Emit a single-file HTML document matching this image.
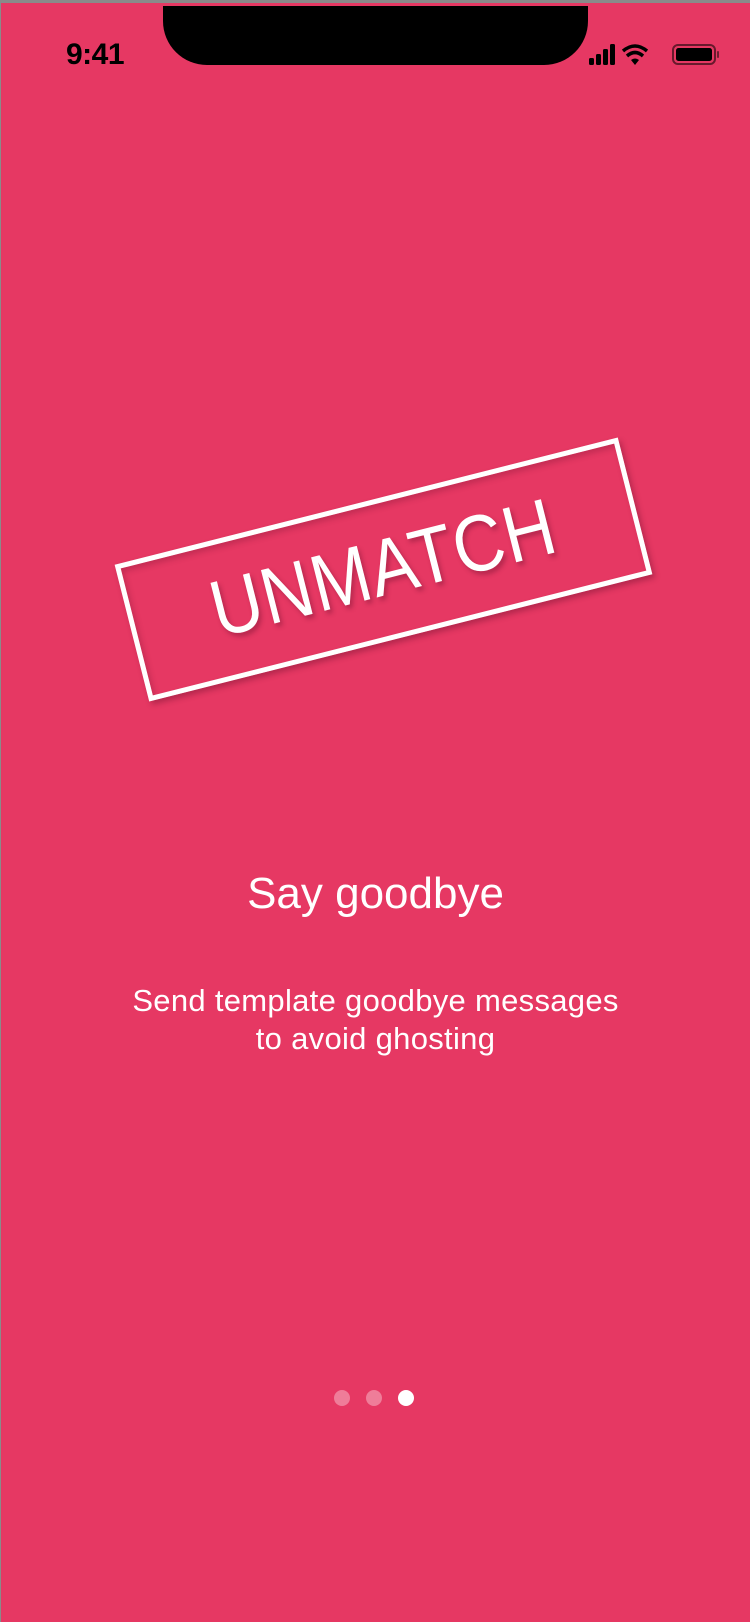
<!DOCTYPE html>
<html><head><meta charset="utf-8"><style>
html,body{margin:0;padding:0}
body{width:750px;height:1622px;background:#8a8a8a;position:relative;overflow:hidden;font-family:"Liberation Sans",sans-serif}
.screen{position:absolute;left:1px;top:3px;right:0;bottom:0;background:#E63863}
.notch{position:absolute;left:162px;top:3px;width:425px;height:59px;background:#000;border-radius:0 0 44px 44px}
.time{position:absolute;left:65px;top:35px;font-size:30px;color:#000;font-weight:bold;letter-spacing:-0.5px}
.stamp{position:absolute;left:123px;top:496px;width:509px;height:131px;border:5px solid #fff;transform:rotate(-14.2deg);box-shadow:2px 4px 6px rgba(120,20,50,.45),inset 2px 4px 6px rgba(120,20,50,.3)}
.stamp span{position:absolute;left:0;right:0;top:18px;text-align:center;color:#fff;font-size:80px;letter-spacing:1px;transform:scaleX(.88);text-shadow:2px 4px 5px rgba(120,20,50,.45)}
.t1{position:absolute;left:0;right:0;top:866px;text-align:center;color:#fff;font-size:44px}
.t2{position:absolute;left:0;right:0;top:979px;text-align:center;color:#fff;font-size:31px;line-height:38px;letter-spacing:0.3px}
.dot{position:absolute;top:1387px;width:16px;height:16px;border-radius:50%}
</style></head><body>
<div class="screen">
<div class="notch"></div>
<div class="time">9:41</div>
<svg style="position:absolute;left:586px;top:40px" width="134" height="24" viewBox="0 0 134 24">
<rect x="2" y="15" width="5" height="7" rx="1.5" fill="#000"/>
<rect x="9" y="11" width="5" height="11" rx="1.5" fill="#000"/>
<rect x="16" y="6" width="5" height="16" rx="1.5" fill="#000"/>
<rect x="23" y="1" width="5" height="21" rx="1.5" fill="#000"/>
<path d="M36 8 Q48 -2 60 8" stroke="#000" stroke-width="3.5" fill="none"/>
<path d="M40 13 Q48 6 56 13" stroke="#000" stroke-width="3.5" fill="none"/>
<path d="M44 17 L48 22 L52 17 Q48 14 44 17Z" fill="#000"/>
<rect x="86" y="2" width="42" height="19" rx="5" fill="none" stroke="#000" stroke-opacity=".55" stroke-width="2"/>
<rect x="89" y="5" width="36" height="13" rx="2.5" fill="#000"/>
<rect x="130" y="8" width="2" height="7" rx="1" fill="#000" fill-opacity=".5"/>
</svg>
<div class="stamp"><span>UNMATCH</span></div>
<div class="t1">Say goodbye</div>
<div class="t2">Send template goodbye messages<br>to avoid ghosting</div>
<div class="dot" style="left:333px;background:rgba(255,255,255,.35)"></div>
<div class="dot" style="left:365px;background:rgba(255,255,255,.35)"></div>
<div class="dot" style="left:397px;background:#fff"></div>
</div>
</body></html>
